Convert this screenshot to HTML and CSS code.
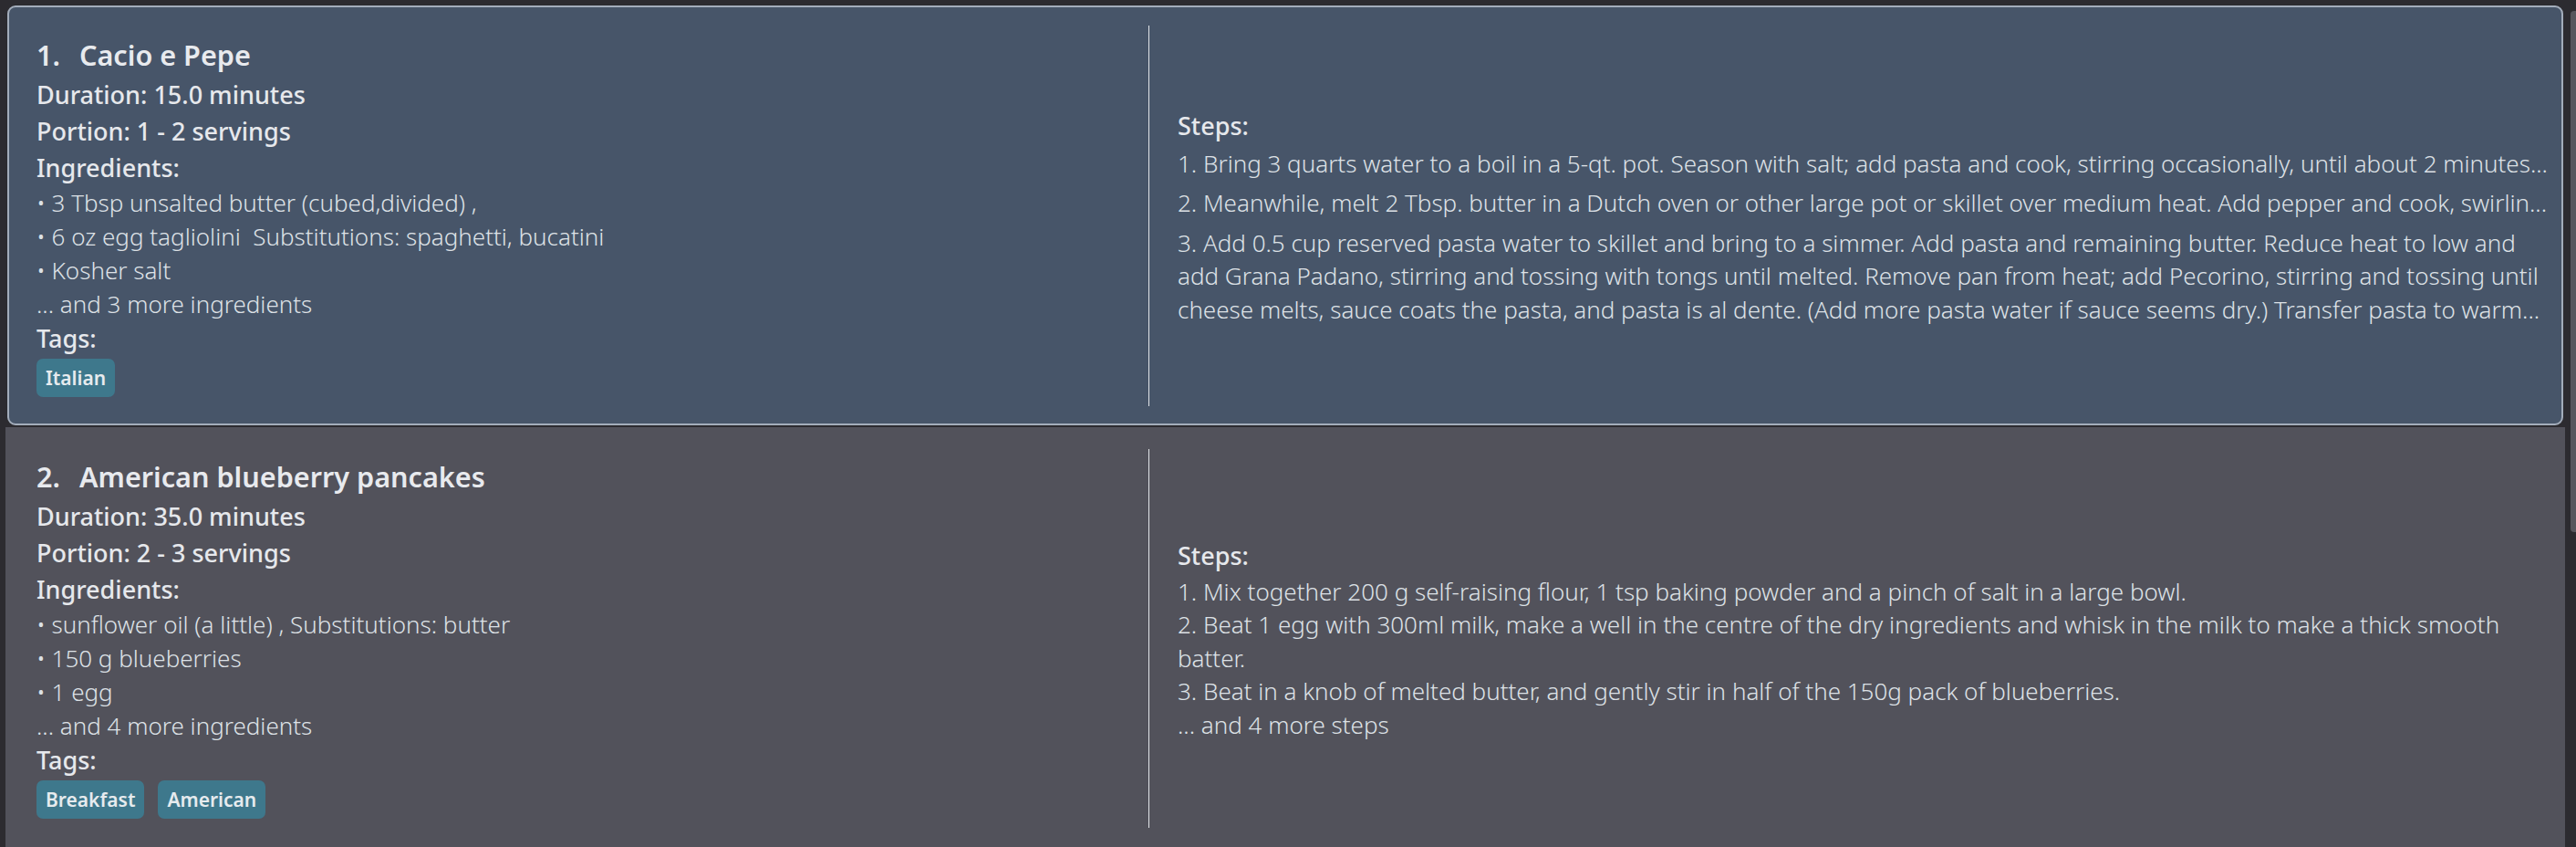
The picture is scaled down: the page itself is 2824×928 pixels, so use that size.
FILE: index.html
```html
<!DOCTYPE html>
<html lang="en">
<head>
<meta charset="utf-8">
<title>Recipes</title>
<link rel="stylesheet" href="styles.css">
</head>
<body>
<div class="app">
  <div class="list">
    <div class="cell cell-selected">
      <div class="card card-selected">
        <div class="info">
          <div class="title"><span class="num">1.</span><span class="name">Cacio e Pepe</span></div>
          <div class="label">Duration: 15.0 minutes</div>
          <div class="label">Portion: 1 - 2 servings</div>
          <div class="label">Ingredients:</div>
          <div class="items">
            <div class="item">• 3 Tbsp unsalted butter (cubed,divided) ,</div>
            <div class="item">• 6 oz egg tagliolini &nbsp;Substitutions: spaghetti, bucatini</div>
            <div class="item">• Kosher salt</div>
            <div class="item">... and 3 more ingredients</div>
          </div>
          <div class="label label-tags">Tags:</div>
          <div class="tags"><span class="tag">Italian</span></div>
        </div>
        <div class="divider"></div>
        <div class="steps">
          <div class="label">Steps:</div>
          <div class="step-list step-list-spaced">
            <div class="step step-line">1. Bring 3 quarts water to a boil in a 5-qt. pot. Season with salt; add pasta and cook, stirring occasionally, until about 2 minutes...</div>
            <div class="step step-line">2. Meanwhile, melt 2 Tbsp. butter in a Dutch oven or other large pot or skillet over medium heat. Add pepper and cook, swirlin...</div>
            <div class="step">3. Add 0.5 cup reserved pasta water to skillet and bring to a simmer. Add pasta and remaining butter. Reduce heat to low and add Grana Padano, stirring and tossing with tongs until melted. Remove pan from heat; add Pecorino, stirring and tossing until cheese melts, sauce coats the pasta, and pasta is al dente. (Add more pasta water if sauce seems dry.) Transfer pasta to warm...</div>
          </div>
        </div>
      </div>
    </div>
    <div class="cell">
      <div class="card">
        <div class="info">
          <div class="title"><span class="num">2.</span><span class="name">American blueberry pancakes</span></div>
          <div class="label">Duration: 35.0 minutes</div>
          <div class="label">Portion: 2 - 3 servings</div>
          <div class="label">Ingredients:</div>
          <div class="items">
            <div class="item">• sunflower oil (a little) , Substitutions: butter</div>
            <div class="item">• 150 g blueberries</div>
            <div class="item">• 1 egg</div>
            <div class="item">... and 4 more ingredients</div>
          </div>
          <div class="label label-tags">Tags:</div>
          <div class="tags"><span class="tag">Breakfast</span><span class="tag">American</span></div>
        </div>
        <div class="divider"></div>
        <div class="steps">
          <div class="label">Steps:</div>
          <div class="step-list">
            <div class="step">1. Mix together 200 g self-raising flour, 1 tsp baking powder and a pinch of salt in a large bowl.</div>
            <div class="step">2. Beat 1 egg with 300ml milk, make a well in the centre of the dry ingredients and whisk in the milk to make a thick smooth batter.</div>
            <div class="step">3. Beat in a knob of melted butter, and gently stir in half of the 150g pack of blueberries.</div>
            <div class="step">... and 4 more steps</div>
          </div>
        </div>
      </div>
    </div>
  </div>
  <div class="scrollbar"><div class="thumb"></div></div>
</div>
</body>
</html>
```
FILE: styles.css
```css
* { box-sizing: border-box; }
html, body { margin: 0; padding: 0; }
body {
  background: #2c2b30;
  font-family: "Noto Sans", "Open Sans", sans-serif;
  color: #e3e6ea;
  overflow: hidden;
}
.app {
  display: flex;
  width: 2824px;
  height: 928px;
  padding: 6px 0 0 6px;
  overflow: hidden;
}
.list {
  width: 2806px;
  display: flex;
  flex-direction: column;
  flex: none;
}
.cell {
  height: 462px;
  flex: none;
  display: flex;
}
.cell-selected {
  padding: 0 2px 2px 2px;
}
.card {
  flex: 1;
  display: grid;
  grid-template-columns: auto 1px 1fr;
  background: #52525b;
}
.card-selected {
  background: #475569;
  border: 2px solid #a3adbb;
  border-radius: 9px;
}
.info {
  width: 1253px;
  padding: 30px 0 0 34px;
}
.card-selected .info {
  width: 1249px;
  padding: 28px 0 0 30px;
}
.title {
  display: flex;
  gap: 21px;
  font-size: 30.6px;
  font-weight: 600;
  line-height: 48px;
  color: #e8eaee;
}
.label {
  font-size: 27px;
  font-weight: 500;
  line-height: 40px;
  color: #e6e8ec;
}
.label-tags {
  line-height: 37px;
}
.items {
  display: flex;
  flex-direction: column;
}
.item {
  font-size: 26px;
  font-weight: 300;
  line-height: 37px;
  white-space: nowrap;
  color: #dde1e6;
}
.tags {
  display: flex;
  gap: 15px;
  margin-top: 4px;
}
.tag {
  display: inline-flex;
  align-items: center;
  height: 42px;
  padding: 0 10px;
  border-radius: 7px;
  background: #3e788c;
  color: #e6ebee;
  font-size: 21px;
  font-weight: 600;
}
.divider {
  background: #e3e6ea;
  margin: 24px 0 23px;
}
.card-selected .divider {
  margin: 20px 0 19px;
}
.steps {
  align-self: center;
  padding: 3px 12px 0 31px;
  min-width: 0;
}
.step-list {
  display: flex;
  flex-direction: column;
  margin-top: 1px;
}
.step-list-spaced {
  gap: 7px;
  margin-top: 3px;
}
.step {
  font-size: 26px;
  font-weight: 300;
  line-height: 36.5px;
  color: #dde1e6;
}
.step-line {
  white-space: nowrap;
  overflow: hidden;
}
.scrollbar {
  width: 12px;
  flex: none;
  display: flex;
  justify-content: flex-end;
  padding-top: 6px;
}
.thumb {
  width: 6px;
  height: 571px;
  background: #57565d;
  border-radius: 4px 0 0 4px;
}
```
